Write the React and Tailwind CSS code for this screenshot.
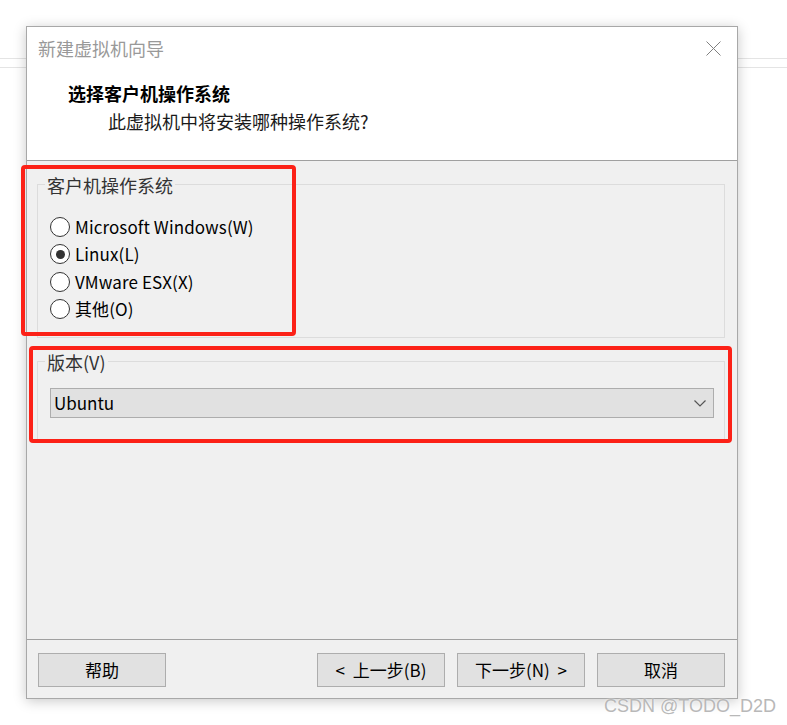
import React, { useState } from "react";

const osList = [
  { id: "win", label: "Microsoft Windows(W)" },
  { id: "linux", label: "Linux(L)" },
  { id: "esx", label: "VMware ESX(X)" },
  { id: "other", label: "其他(O)" },
];

const font = "font-['Noto_Sans_CJK_SC','Noto_Sans',sans-serif]";

function Radio({ checked, label, onClick }) {
  return (
    <div className="flex h-[27.5px] items-center cursor-default" onClick={onClick}>
      <div className="flex h-[20px] w-[20px] items-center justify-center rounded-full border border-[#333] bg-white">
        {checked && <div className="h-[9px] w-[9px] rounded-full bg-[#333]" />}
      </div>
      <span className="ml-[5px] text-[17px] leading-[24px] tracking-[0.1px] text-black">{label}</span>
    </div>
  );
}

function Group({ title, className, children }) {
  return (
    <div className={"border border-[#dcdcdc] " + className}>
      <div className="-mt-[12px] ml-[7px] w-fit bg-[#f0f0f0] px-[2px] text-[18px] leading-[24px] text-[#333]">
        {title}
      </div>
      {children}
    </div>
  );
}

function Button({ children }) {
  return (
    <button className="h-[34px] w-[128px] border border-[#adadad] bg-[#e1e1e1] text-[17px] leading-[24px] text-black [word-spacing:4px]">
      {children}
    </button>
  );
}

export default function App() {
  const [os, setOs] = useState("linux");

  return (
    <div className={"relative h-[725px] w-[787px] overflow-hidden bg-white " + font}>
      {/* page lines behind the dialog */}
      <div className="absolute left-0 right-0 top-[58px] h-px bg-[#e4e4e4]" />
      <div className="absolute left-0 right-0 top-[67px] h-px bg-[#e4e4e4]" />

      <div className="relative pl-[26px] pt-[26px]">
        <div className="flex h-[673px] w-[712px] flex-col border border-[#a8a8a8] bg-[#f0f0f0] shadow-[0_2px_12px_rgba(0,0,0,0.22)]">
          {/* header */}
          <div className="h-[134px] border-b border-[#a0a0a0] bg-white">
            <div className="flex items-center justify-between pl-[11px] pr-[16px] pt-[9px]">
              <span className="text-[18px] leading-[24px] text-[#999]">新建虚拟机向导</span>
              <svg width="15" height="15" viewBox="0 0 15 15">
                <path d="M0.5 0.5 L14.5 14.5 M14.5 0.5 L0.5 14.5" stroke="#808080" strokeWidth="1" />
              </svg>
            </div>
            <div className="mt-[21px] pl-[41px] text-[18px] font-bold leading-[24px] text-black">
              选择客户机操作系统
            </div>
            <div className="mt-[4px] pl-[81px] text-[18px] leading-[24px] text-[#1a1a1a]">
              此虚拟机中将安装哪种操作系统?
            </div>
          </div>

          {/* body */}
          <div className="flex-1 pl-[10px] pr-[12px] pt-[23px]">
            <Group title="客户机操作系统" className="h-[154px]">
              <div className="mt-[16px] pl-[12px]">
                {osList.map((o) => (
                  <Radio key={o.id} label={o.label} checked={os === o.id} onClick={() => setOs(o.id)} />
                ))}
              </div>
            </Group>
            <Group title="版本(V)" className="mt-[23px] h-[79px]">
              <div className="ml-[12px] mr-[10px] mt-[14px] flex h-[30px] items-center justify-between border border-[#adadad] bg-[#e1e1e1] pl-[3px] pr-[7px]">
                <span className="text-[17px] leading-[24px] text-black">Ubuntu</span>
                <svg width="12" height="7" viewBox="0 0 12 7">
                  <path d="M0.5 0.5 L6 6 L11.5 0.5" fill="none" stroke="#555" strokeWidth="1.2" />
                </svg>
              </div>
            </Group>
          </div>

          {/* footer */}
          <div className="flex h-[59px] items-start border-t border-[#a0a0a0] pl-[11px] pr-[12px] pt-[13px]">
            <Button>帮助</Button>
            <div className="ml-auto flex gap-[12px]">
              <Button>&lt; 上一步(B)</Button>
              <Button>下一步(N) &gt;</Button>
              <Button>取消</Button>
            </div>
          </div>
        </div>
      </div>

      {/* red annotation frames */}
      <div className="absolute left-[21px] top-[165px] h-[171px] w-[275px] rounded-[4px] border-[4px] border-[#fc2117]" />
      <div className="absolute left-[29px] top-[346px] h-[97px] w-[703px] rounded-[4px] border-[4px] border-[#fc2117]" />

      {/* watermark */}
      <div className="absolute left-[604px] top-[694px] font-['Liberation_Sans',Arial,sans-serif] text-[18px] leading-[24px] text-[#b8b8b8] [text-shadow:0_0_2px_#fff]">
        CSDN @TODO_D2D
      </div>
    </div>
  );
}
